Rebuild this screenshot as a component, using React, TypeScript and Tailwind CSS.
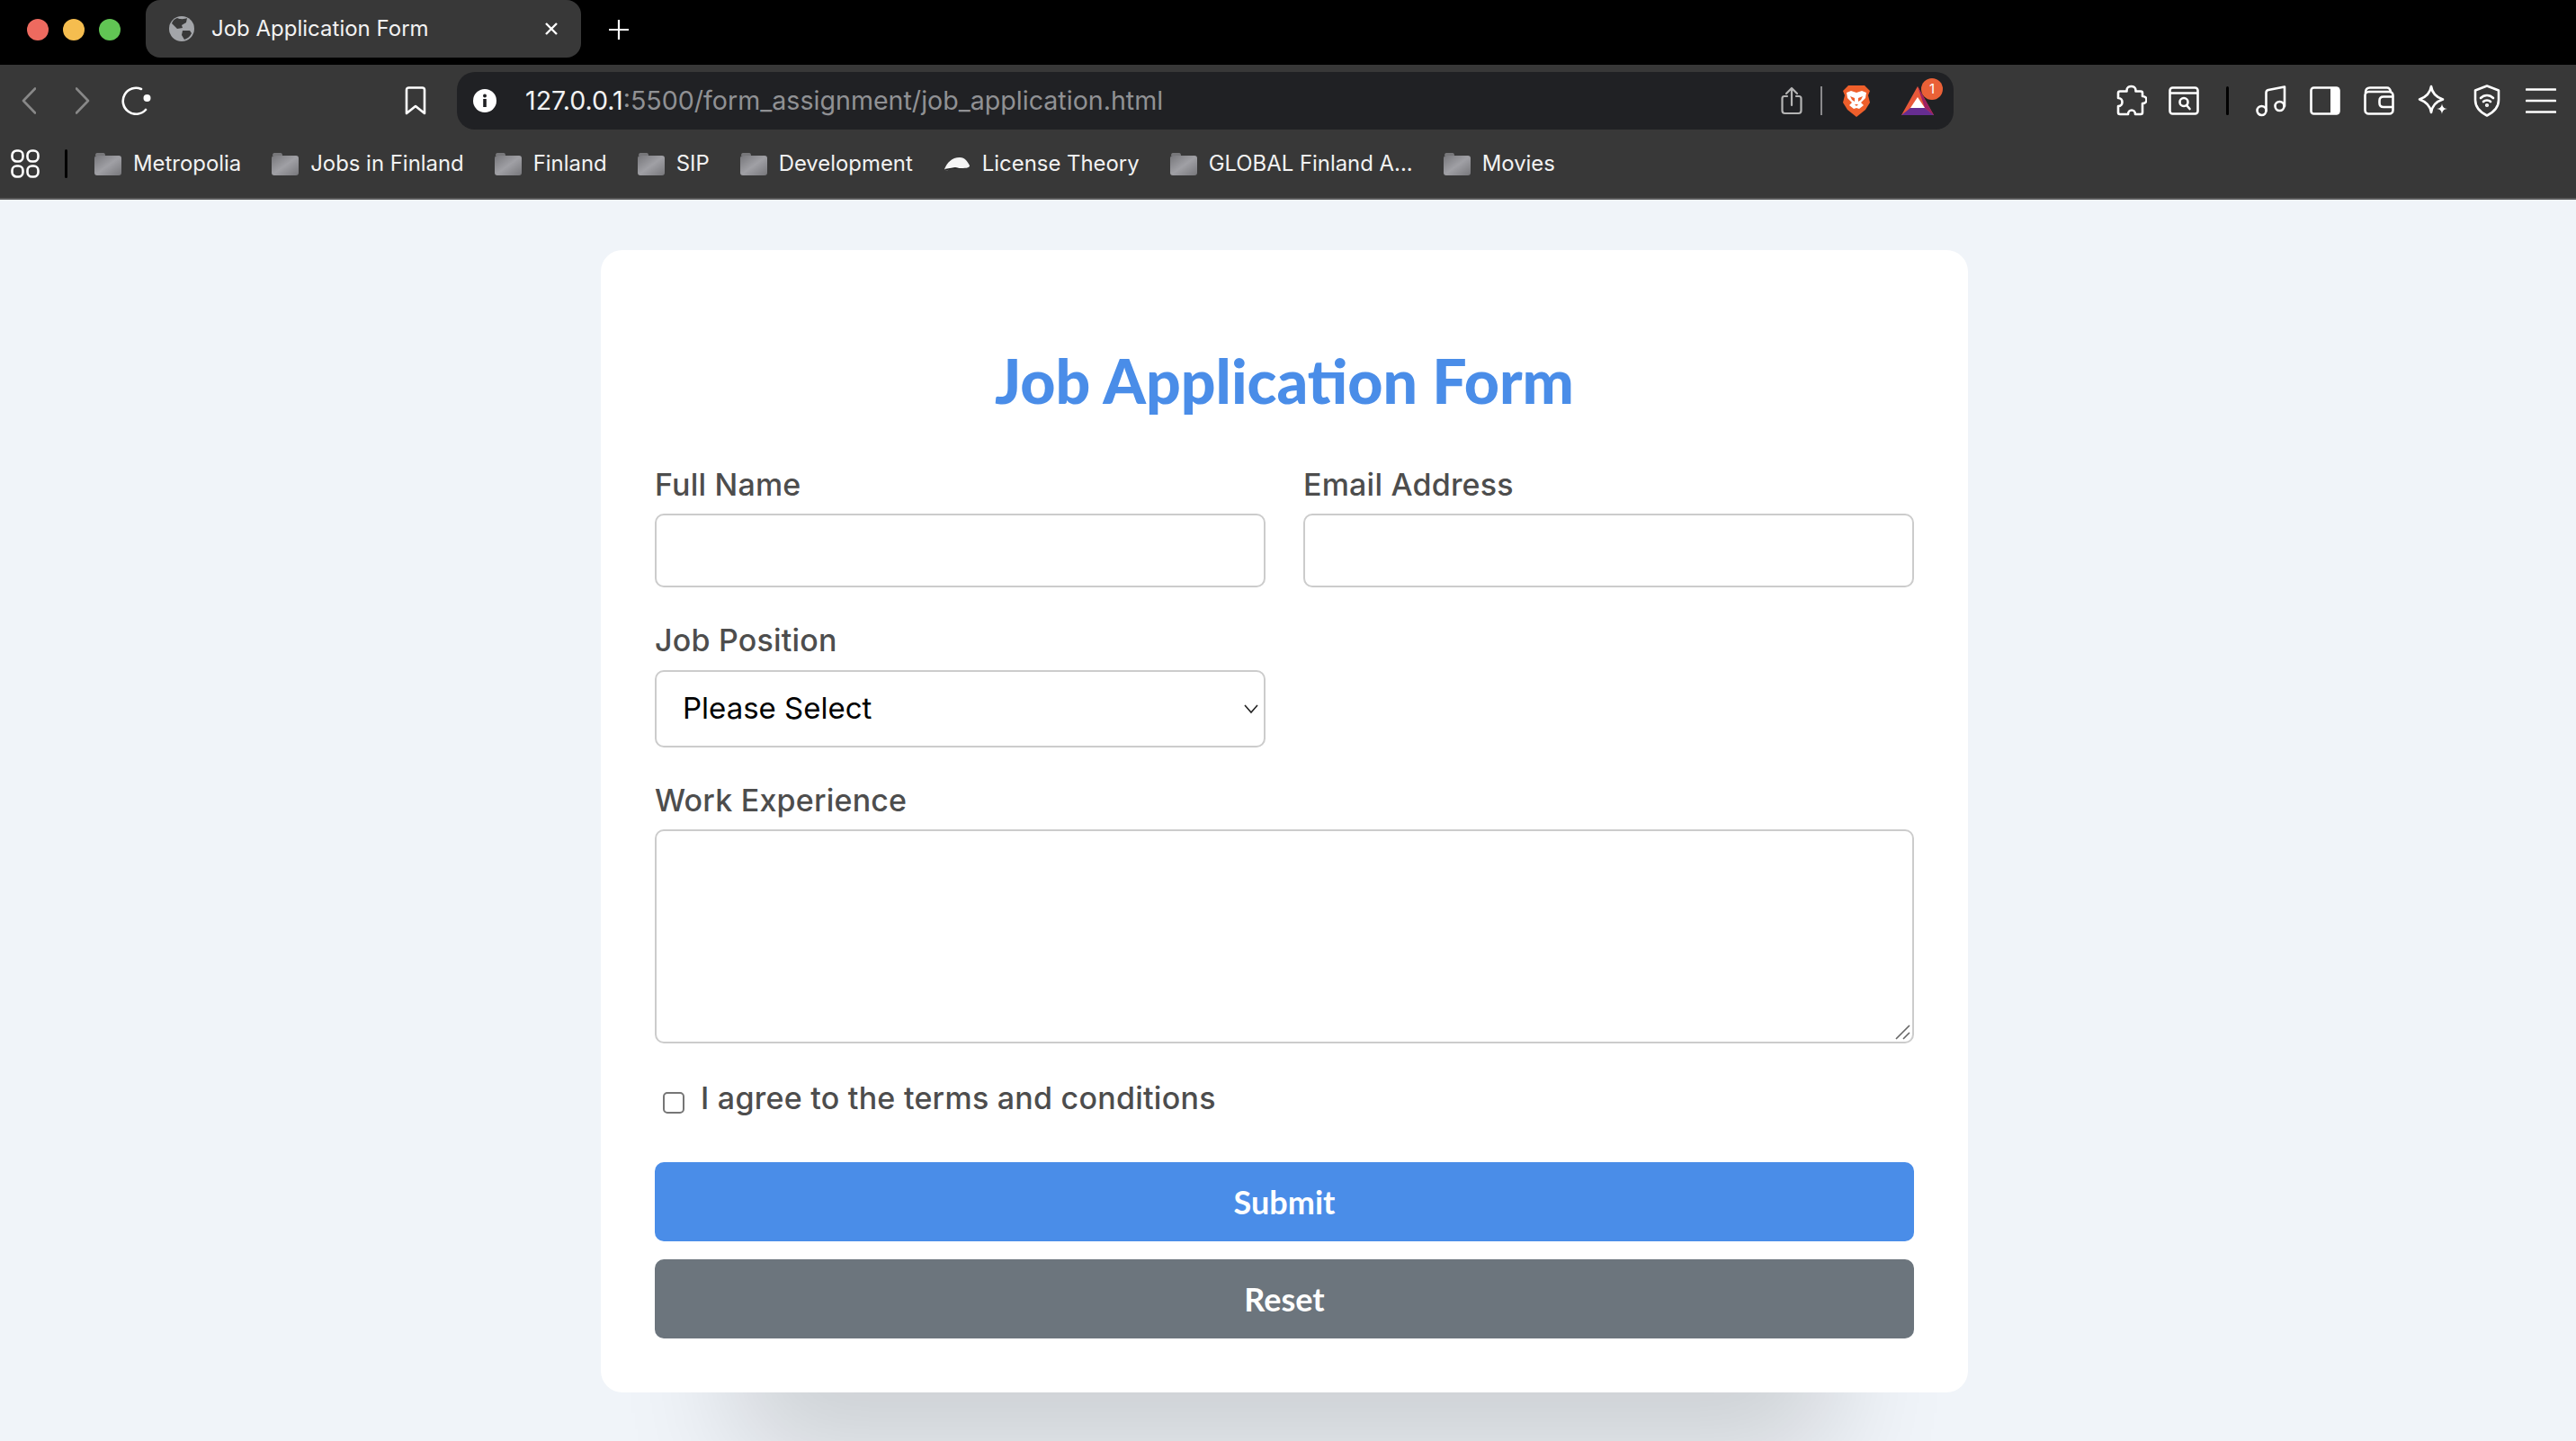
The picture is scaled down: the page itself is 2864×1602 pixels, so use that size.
import React from "react";

const bookmarks = [
  { name: "Metropolia", icon: "folder" },
  { name: "Jobs in Finland", icon: "folder" },
  { name: "Finland", icon: "folder" },
  { name: "SIP", icon: "folder" },
  { name: "Development", icon: "folder" },
  { name: "License Theory", icon: "cloud" },
  { name: "GLOBAL Finland A...", icon: "folder" },
  { name: "Movies", icon: "folder" },
];

function FolderIcon() {
  return (
    <svg width="30" height="26" viewBox="0 0 30 26" className="shrink-0">
      <defs>
        <linearGradient id="folderFill" x1="0" y1="0" x2="1" y2="1">
          <stop offset="0" stopColor="#77777b" />
          <stop offset="0.5" stopColor="#a0a0a5" />
          <stop offset="1" stopColor="#77777b" />
        </linearGradient>
      </defs>
      <path d="M1 4 Q1 1 3 1 H10 Q12 1 12 4 Z" fill="#77777a" />
      <rect x="0" y="4" width="30" height="22" rx="3" fill="url(#folderFill)" />
    </svg>
  );
}

function CloudIcon() {
  return (
    <svg width="30" height="18" viewBox="0 0 30 18" className="shrink-0">
      <path d="M1 15 C4 8 9 2 18 2 C24 2 27 7 29 11 C29 14 24 14 17 14 C10 13 6 14 4 17 Z" fill="#f4f4f4" />
      <path d="M1 15 L4 17 C7 14 14 15 22 15 L13 13 Z" fill="#222" />
    </svg>
  );
}

function Globe() {
  return (
    <svg width="28" height="28" viewBox="0 0 28 28" className="shrink-0">
      <circle cx="14" cy="14" r="14" fill="#a3a5a9" />
      <path d="M9 2 C13 4 18 3 20 2 L19 7 L14 10 L15 13 L9 14 L5 10 L3 8 C4 5 6 3 9 2 Z" fill="#383838" />
      <path d="M15 16 L23 16 L25 19 C23 23 20 25 17 26 L14 21 Z" fill="#383838" />
    </svg>
  );
}

function Brave() {
  return (
    <svg width="32" height="36" viewBox="0 0 32 36">
      <path d="M7 1 H25 L31 7 L29 12 L31 20 L26 28 L16 36 L6 28 L1 20 L3 12 L1 7 Z" fill="#ee5f2b" />
      <path d="M5 9 L10 7 L16 9 L22 7 L27 9 L26 15 L21 20 L24 23 L19 27 L16 26 L13 27 L8 23 L11 20 L6 15 Z" fill="#fff" />
      <path d="M9 13 L14 15 L14 19 L11 17 Z M23 13 L18 15 L18 19 L21 17 Z M14 22 H18 L16 24 Z" fill="#ee5f2b" />
    </svg>
  );
}

function Bat() {
  return (
    <svg width="36" height="32" viewBox="0 0 36 32">
      <path d="M18 0 L36 32 H0 Z" fill="#e8583a" />
      <path d="M18 0 L36 32 L26 24 Z" fill="#9e1f63" />
      <path d="M0 32 H36 L26 24 H10 Z" fill="#662d91" />
      <path d="M18 12 L26 24 H10 Z" fill="#fff" />
    </svg>
  );
}

function ToolbarIcon({ w, h, className, children }: { w: number; h: number; className?: string; children: React.ReactNode }) {
  return (
    <svg width={w} height={h} viewBox={`0 0 ${w} ${h}`} fill="none" stroke="#fff" strokeWidth="2.6" strokeLinecap="round" strokeLinejoin="round" className={`shrink-0 ${className ?? ""}`}>
      {children}
    </svg>
  );
}

function Label({ children }: { children: React.ReactNode }) {
  return <label className="block h-[38px] text-[34px] leading-[38px] font-medium text-[#4d4d4d] font-['Inter',sans-serif] tracking-[0.2px]">{children}</label>;
}

export default function App() {
  return (
    <div className="h-screen overflow-hidden flex flex-col bg-[#f0f4f9] font-['Inter',sans-serif]">
      {/* tab strip */}
      <div className="h-[72px] shrink-0 bg-black flex items-start">
        <div className="flex items-center gap-4 pl-[30px] pt-[21px] w-[162px]">
          <span className="w-6 h-6 rounded-full bg-[#ee6a5f]" />
          <span className="w-6 h-6 rounded-full bg-[#f5bd4f]" />
          <span className="w-6 h-6 rounded-full bg-[#61c554]" />
        </div>
        <div className="w-[484px] h-[64px] bg-[#383838] rounded-2xl flex items-center pl-[26px] pr-[26px]">
          <Globe />
          <span className="ml-[19px] text-[24px] text-[#f2f2f2] whitespace-nowrap">Job Application Form</span>
          <svg width="14" height="14" viewBox="0 0 14 14" className="ml-auto" stroke="#fff" strokeWidth="2.4">
            <path d="M1 1 L13 13 M13 1 L1 13" />
          </svg>
        </div>
        <svg width="22" height="22" viewBox="0 0 22 22" className="ml-[31px] mt-[22px]" stroke="#fff" strokeWidth="2.2">
          <path d="M11 0 V22 M0 11 H22" />
        </svg>
      </div>

      {/* address bar */}
      <div className="h-[150px] shrink-0 bg-[#383838] border-b-2 border-[#5a5a5a] flex flex-col">
        <div className="h-[64px] mt-2 flex items-center pl-[24px]">
          <ToolbarIcon w={16} h={30} className="opacity-40">
            <path d="M15 1.5 L2 15 L15 28.5" />
          </ToolbarIcon>
          <ToolbarIcon w={16} h={30} className="ml-[44px] opacity-40">
            <path d="M1 1.5 L14 15 L1 28.5" />
          </ToolbarIcon>
          <svg width="33" height="32" viewBox="0 0 33 32" className="ml-[35px] shrink-0" fill="none">
            <path d="M27 26 A14.5 14.5 0 1 1 22 3" stroke="#fff" strokeWidth="2.6" strokeLinecap="round" />
            <circle cx="28.5" cy="13" r="4" fill="#fff" />
          </svg>
          <ToolbarIcon w={24} h={32} className="ml-[282px]">
            <path d="M2 30 V4 Q2 1.5 4.5 1.5 H19.5 Q22 1.5 22 4 V30 L12 22 Z" />
          </ToolbarIcon>

          <div className="ml-[34px] w-[1664px] h-[64px] bg-[#202124] rounded-[20px] flex items-center pl-[18px] pr-[22px]">
            <svg width="26" height="26" viewBox="0 0 26 26" className="shrink-0">
              <circle cx="13" cy="13" r="13" fill="#fff" />
              <rect x="11.2" y="11" width="3.6" height="9" fill="#202124" />
              <circle cx="13" cy="7.5" r="2" fill="#202124" />
            </svg>
            <span className="ml-[32px] text-[28.6px] whitespace-nowrap text-[#909194]">
              <span className="text-[#f2f2f2]">127.0.0.1</span>:5500/form_assignment/job_application.html
            </span>
            <svg width="24" height="32" viewBox="0 0 24 32" className="ml-auto shrink-0" fill="none" stroke="#b4b4b4" strokeWidth="2.2" strokeLinecap="round" strokeLinejoin="round">
              <path d="M7 11 H4 Q1.5 11 1.5 13.5 V27 Q1.5 30 4.5 30 H19.5 Q22.5 30 22.5 27 V13.5 Q22.5 11 20 11 H17" />
              <path d="M12 21 V2 M6 8 L12 2 L18 8" />
            </svg>
            <span className="ml-[20px] w-[2px] h-[32px] bg-[#8a8a8c] shrink-0" />
            <span className="ml-[22px] shrink-0 flex"><Brave /></span>
            <span className="ml-[34px] shrink-0 relative flex">
              <Bat />
              <span className="absolute -top-[9px] -right-[10px] w-6 h-6 rounded-full bg-[#ea6137] text-[15px] leading-6 text-center text-white">1</span>
            </span>
          </div>

          <ToolbarIcon w={34} h={36} className="ml-[181px]">
            <path d="M11.5 6.5 C11.5 0.5 21.5 0.5 21.5 6.5 V7.5 H27 Q29 7.5 29 9.5 V13 C35 13 35 21 29 21 V31 Q29 33 27 33 H21 C21 27 13 27 13 33 H4 Q2 33 2 31 V24 C8 24 8 15 2 15 V9.5 Q2 7.5 4 7.5 H11.5 Z" />
          </ToolbarIcon>
          <ToolbarIcon w={34} h={32} className="ml-[24px]">
            <rect x="1.5" y="1.5" width="31" height="29" rx="3" />
            <path d="M2 7.5 H32 M20 21 L23.5 25" />
            <circle cx="17" cy="17.5" r="4.5" />
          </ToolbarIcon>
          <span className="ml-[30px] w-[3px] h-[32px] bg-black rounded-full shrink-0" />
          <ToolbarIcon w={34} h={36} className="ml-[30px]">
            <circle cx="6.5" cy="29" r="5" />
            <circle cx="26.5" cy="24" r="5" />
            <path d="M11.5 29 V9 Q11.5 6.5 14 6 L32 2.5 V24" />
          </ToolbarIcon>
          <svg width="34" height="32" viewBox="0 0 34 32" className="ml-[26px] shrink-0">
            <rect x="1.5" y="1.5" width="31" height="29" rx="3" fill="none" stroke="#fff" strokeWidth="2.6" />
            <rect x="23" y="1.5" width="9.5" height="29" fill="#fff" />
          </svg>
          <ToolbarIcon w={34} h={32} className="ml-[26px]">
            <path d="M2 7 Q2 1.5 7 1.5 H26 Q29 1.5 30 6" />
            <rect x="1.5" y="6" width="31" height="24.5" rx="4" />
            <path d="M32 11.5 H22 Q17.5 11.5 17.5 16 V18.5 Q17.5 23 22 23 H32" />
          </ToolbarIcon>
          <svg width="34" height="36" viewBox="0 0 34 36" className="ml-[26px] shrink-0">
            <path d="M15 2 C16 9 20 14 28 16.5 C20 19 16 24 15 31 C14 24 9 19 2 16.5 C9 14 14 9 15 2 Z" fill="none" stroke="#fff" strokeWidth="2.6" strokeLinejoin="round" />
            <path d="M27 21 C27.5 25 29 26.5 33 27 C29 27.5 27.5 29 27 33 C26.5 29 25 27.5 21 27 C25 26.5 26.5 25 27 21 Z" fill="#fff" />
          </svg>
          <ToolbarIcon w={30} h={36} className="ml-[28px]">
            <path d="M15 1.5 L28 6.5 V17 C28 25 22 31 15 34.5 C8 31 2 25 2 17 V6.5 Z" />
            <path d="M8 15 C12 11 18 11 22 15 M11 19 C13 17 17 17 19 19" />
            <circle cx="15" cy="23" r="0.8" fill="#fff" />
          </ToolbarIcon>
          <ToolbarIcon w={34} h={30} className="ml-[28px]">
            <path d="M1 2.5 H33 M1 15 H33 M1 27.5 H33" />
          </ToolbarIcon>
        </div>

        {/* bookmarks */}
        <div className="flex-1 flex items-center pl-[12px]">
          <svg width="32" height="32" viewBox="0 0 32 32" fill="none" stroke="#fff" strokeWidth="2.6" className="shrink-0">
            <rect x="1.5" y="1.5" width="12" height="12" rx="5" />
            <rect x="18.5" y="1.5" width="12" height="12" rx="5" />
            <rect x="1.5" y="18.5" width="12" height="12" rx="5" />
            <rect x="18.5" y="18.5" width="12" height="12" rx="5" />
          </svg>
          <span className="ml-[28px] w-[3px] h-[32px] bg-black rounded-full shrink-0" />
          <div className="ml-[30px] flex items-center gap-[34px]">
            {bookmarks.map((b) => (
              <div key={b.name} className="flex items-center gap-[13px]">
                {b.icon === "folder" ? <FolderIcon /> : <CloudIcon />}
                <span className="text-[23.9px] text-[#f2f2f2] whitespace-nowrap">{b.name}</span>
              </div>
            ))}
          </div>
        </div>
      </div>

      {/* page */}
      <div className="flex-1 flex justify-center items-start pr-2 pt-[56px]">
        <form className="w-[1520px] shrink-0 bg-white rounded-[24px] px-[60px] pb-[60px] pt-[106px] shadow-[0_224px_120px_-152px_rgba(0,0,0,0.15)]">
          <h1 className="h-[80px] leading-[78px] text-center text-[68px] font-black text-[#4a8de8] font-['Lato',sans-serif]">Job Application Form</h1>

          <div className="mt-[56px] grid grid-cols-2 gap-x-[42px]">
            <div>
              <Label>Full Name</Label>
              <input type="text" className="mt-[13px] block w-full h-[82px] rounded-[10px] border-2 border-[#cccccc] bg-white" />
            </div>
            <div>
              <Label>Email Address</Label>
              <input type="email" className="mt-[13px] block w-full h-[82px] rounded-[10px] border-2 border-[#cccccc] bg-white" />
            </div>
          </div>

          <div className="mt-[40px] grid grid-cols-2 gap-x-[42px]">
            <div>
              <Label>Job Position</Label>
              <div className="mt-[14px] relative">
                <select className="block w-full h-[86px] appearance-none rounded-[10px] border-2 border-[#cccccc] bg-white pl-[29px] text-[33px] text-black font-['Inter',sans-serif]">
                  <option>Please Select</option>
                </select>
                <svg width="18" height="12" viewBox="0 0 18 12" fill="none" stroke="#222" strokeWidth="1.6" className="absolute right-[7px] top-[37px] pointer-events-none">
                  <path d="M2 2 L9 10 L16 2" />
                </svg>
              </div>
            </div>
          </div>

          <div className="mt-[40px]">
            <Label>Work Experience</Label>
            <div className="mt-[13px] relative">
              <textarea className="block w-full h-[238px] resize-none rounded-[10px] border-2 border-[#cccccc] bg-white" />
              <svg width="18" height="18" viewBox="0 0 18 18" stroke="#666" strokeWidth="1.6" className="absolute right-[3px] bottom-[3px] pointer-events-none">
                <path d="M1 16 L16 1 M9 16 L16 9" />
              </svg>
            </div>
          </div>

          <div className="mt-[42px] flex items-start">
            <input type="checkbox" className="ml-[9px] mt-[12px] w-6 h-6 shrink-0 appearance-none bg-white border-2 border-[#767676] rounded-[5px]" />
            <span className="ml-[18px] h-[38px] text-[34px] leading-[38px] font-medium text-[#4d4d4d] tracking-[0.25px] whitespace-nowrap">I agree to the terms and conditions</span>
          </div>

          <button type="button" className="mt-[52px] block w-full h-[88px] rounded-[10px] bg-[#4a8de8] text-white text-[36px] font-bold font-['Lato',sans-serif]">Submit</button>
          <button type="button" className="mt-[20px] block w-full h-[88px] rounded-[10px] bg-[#6c757d] text-white text-[36px] font-bold font-['Lato',sans-serif]">Reset</button>
        </form>
      </div>
    </div>
  );
}
